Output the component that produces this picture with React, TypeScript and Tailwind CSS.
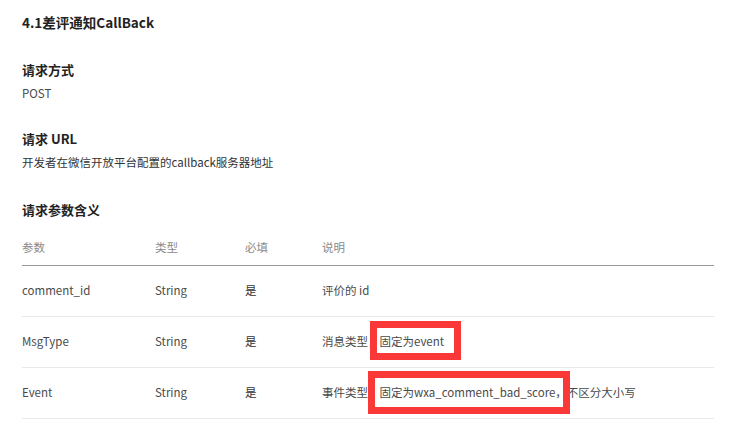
import React from "react";

const font = { fontFamily: '"Noto Sans CJK SC", "Noto Sans", sans-serif' };

function Row({ a, b, c, d }: { a: string; b: string; c: string; d: React.ReactNode }) {
  return (
    <div className="grid grid-cols-[133px_90px_77px_1fr] h-[51px] border-b border-[#e9e9e9] items-center text-[11.5px] text-[#4a4a4a]">
      <div>{a}</div>
      <div>{b}</div>
      <div className="text-[#333]">{c}</div>
      <div className="relative">{d}</div>
    </div>
  );
}

export default function App() {
  return (
    <div className="w-[745px] h-[425px] bg-white pl-[22px] overflow-hidden" style={font}>
      <div className="h-[44px] flex items-center text-[13.5px] font-bold text-[#222]">4.1差评通知CallBack</div>
      <div className="h-[14px]" />
      <div className="h-[24px] flex items-center text-[13px] font-bold text-[#222]">请求方式</div>
      <div className="h-[24px] flex items-center text-[11.5px] text-[#4a4a4a]">POST</div>
      <div className="h-[21px]" />
      <div className="h-[24px] flex items-center text-[13px] font-bold text-[#222]">请求 URL</div>
      <div className="h-[24px] flex items-center text-[11.5px] text-[#333]">开发者在微信开放平台配置的callback服务器地址</div>
      <div className="h-[23px]" />
      <div className="h-[24px] flex items-center text-[13px] font-bold text-[#222]">请求参数含义</div>
      <div className="h-[9px]" />
      <div className="w-[692px]">
        <div className="grid grid-cols-[133px_90px_77px_1fr] h-[35px] border-b border-[#999] items-center text-[11.5px] text-[#8a8a8a]">
          <div>参数</div>
          <div>类型</div>
          <div>必填</div>
          <div>说明</div>
        </div>
        <Row a="comment_id" b="String" c="是" d={<span>评价的 id</span>} />
        <Row
          a="MsgType"
          b="String"
          c="是"
          d={
            <span>
              消息类型，
              <span className="relative">
                固定为event
                <span className="absolute left-[-10px] right-[-17px] top-[-12px] bottom-[-11px] border-[7px] border-[#fb3838]" />
              </span>
            </span>
          }
        />
        <Row
          a="Event"
          b="String"
          c="是"
          d={
            <span>
              事件类型，
              <span className="relative">
                固定为wxa_comment_bad_score，
                <span className="absolute left-[-12px] right-[-3px] top-[-13px] bottom-[-14px] border-[7px] border-[#fb3838]" />
              </span>
              不区分大小写
            </span>
          }
        />
      </div>
    </div>
  );
}
